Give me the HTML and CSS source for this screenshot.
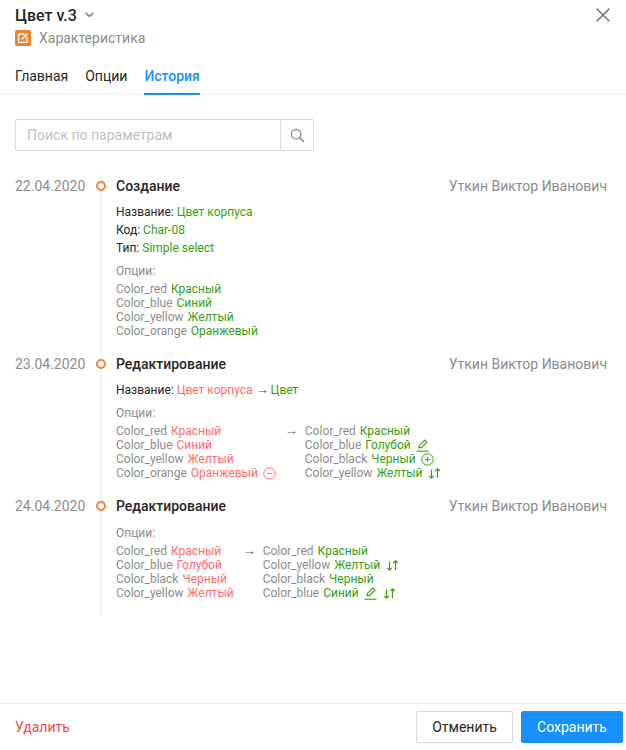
FILE: index.html
```html
<html>

<head>
    <title>Цвет v.3</title>
    <link rel="stylesheet" href="styles.css">
</head>

<body>
    <div class="header">
        <div class="title_row">
            <div class="title">Цвет v.3</div>
            <svg class="chevron" width="9" height="6" viewBox="0 0 9 6"><path d="M.7 1l3.8 3.4L8.3 1" fill="none" stroke="#8c8c8c" stroke-width="1.8"/></svg>
            <svg class="close" width="14" height="14" viewBox="0 0 14 14"><path d="M.6.6l12.8 12.8M13.4.6L.6 13.4" fill="none" stroke="#808080" stroke-width="1.6"/></svg>
        </div>
        <div class="subtitle">
            <svg width="16" height="16" viewBox="0 0 16 16"><rect width="16" height="16" rx="1.5" fill="#f5822e"/><path d="M9.5 4H3.6v8.4H12V7" fill="none" stroke="#fff" stroke-width="1.3"/><path d="M6.8 9.2l5.6-5.6" stroke="#fff" stroke-width="1.6"/></svg>
            <span>Характеристика</span>
        </div>
    </div>

    <div class="tabs">
        <div class="tab">Главная</div>
        <div class="tab">Опции</div>
        <div class="tab tab_active">История</div>
    </div>

    <div class="content">
        <div class="search">
            <div class="search_input">Поиск по параметрам</div>
            <div class="search_button">
                <svg width="15" height="15" viewBox="0 0 15 15"><circle cx="6.2" cy="6.2" r="4.8" fill="none" stroke="#808080" stroke-width="1.2"/><path d="M9.8 9.8l4.2 4.2" stroke="#808080" stroke-width="1.3"/></svg>
            </div>
        </div>

        <div class="event event_first">
            <div class="date">22.04.2020</div>
            <div class="body">
                <div class="bullet"></div>
                <div class="event_head">
                    <div class="event_name">Создание</div>
                    <div class="author">Уткин Виктор Иванович</div>
                </div>
                <div class="field">Название: <span class="new">Цвет корпуса</span></div>
                <div class="field">Код: <span class="new">Char-08</span></div>
                <div class="field">Тип: <span class="new">Simple select</span></div>
                <div class="options_label">Опции:</div>
                <div class="opt">Color_red <span class="new">Красный</span></div>
                <div class="opt">Color_blue <span class="new">Синий</span></div>
                <div class="opt">Color_yellow <span class="new">Желтый</span></div>
                <div class="opt">Color_orange <span class="new">Оранжевый</span></div>
            </div>
        </div>

        <div class="event">
            <div class="date">23.04.2020</div>
            <div class="body">
                <div class="bullet"></div>
                <div class="event_head">
                    <div class="event_name">Редактирование</div>
                    <div class="author">Уткин Виктор Иванович</div>
                </div>
                <div class="field">Название: <span class="old">Цвет корпуса</span> <span class="field_arrow">→</span> <span class="new">Цвет</span></div>
                <div class="options_label">Опции:</div>
                <div class="compare">
                    <div>
                        <div class="opt">Color_red <span class="old">Красный</span></div>
                        <div class="opt">Color_blue <span class="old">Синий</span></div>
                        <div class="opt">Color_yellow <span class="old">Желтый</span></div>
                        <div class="opt">Color_orange <span class="old">Оранжевый</span>
                            <svg class="icon" width="13" height="13" viewBox="0 0 13 13"><circle cx="6.5" cy="6.5" r="5.7" fill="none" stroke="#ff6b6b"/><path d="M3.8 6.5h5.4" stroke="#ff6b6b"/></svg>
                        </div>
                    </div>
                    <div class="arrow">→</div>
                    <div>
                        <div class="opt">Color_red <span class="new">Красный</span></div>
                        <div class="opt">Color_blue <span class="new">Голубой</span>
                            <svg class="icon" width="13" height="13" viewBox="0 0 13 13"><path d="M3 8.8l.5-2.6L8.8 1l2.2 2.2-5.3 5.2z" fill="none" stroke="#389e0d" stroke-width="1.1"/><path d="M.5 12.2h12" stroke="#389e0d" stroke-width="1.1"/></svg>
                        </div>
                        <div class="opt">Color_black <span class="new">Черный</span>
                            <svg class="icon" width="13" height="13" viewBox="0 0 13 13"><circle cx="6.5" cy="6.5" r="5.7" fill="none" stroke="#389e0d"/><path d="M3.8 6.5h5.4M6.5 3.8v5.4" stroke="#389e0d"/></svg>
                        </div>
                        <div class="opt">Color_yellow <span class="new">Желтый</span>
                            <svg class="icon icon_swap" width="13" height="13" viewBox="0 0 13 13"><path d="M3.5 2.5v8.5M1.2 8.8l2.3 2.3 2.3-2.3M9.5 11V2M7.2 4.2l2.3-2.3 2.3 2.3" fill="none" stroke="#389e0d" stroke-width="1.2"/></svg>
                        </div>
                    </div>
                </div>
            </div>
        </div>

        <div class="event">
            <div class="date">24.04.2020</div>
            <div class="body">
                <div class="bullet"></div>
                <div class="event_head">
                    <div class="event_name">Редактирование</div>
                    <div class="author">Уткин Виктор Иванович</div>
                </div>
                <div class="options_label">Опции:</div>
                <div class="compare">
                    <div>
                        <div class="opt">Color_red <span class="old">Красный</span></div>
                        <div class="opt">Color_blue <span class="old">Голубой</span></div>
                        <div class="opt">Color_black <span class="old">Черный</span></div>
                        <div class="opt">Color_yellow <span class="old">Желтый</span></div>
                    </div>
                    <div class="arrow">→</div>
                    <div>
                        <div class="opt">Color_red <span class="new">Красный</span></div>
                        <div class="opt">Color_yellow <span class="new">Желтый</span>
                            <svg class="icon icon_swap" width="13" height="13" viewBox="0 0 13 13"><path d="M3.5 2.5v8.5M1.2 8.8l2.3 2.3 2.3-2.3M9.5 11V2M7.2 4.2l2.3-2.3 2.3 2.3" fill="none" stroke="#389e0d" stroke-width="1.2"/></svg>
                        </div>
                        <div class="opt">Color_black <span class="new">Черный</span></div>
                        <div class="opt">Color_blue <span class="new">Синий</span>
                            <svg class="icon" width="13" height="13" viewBox="0 0 13 13"><path d="M3 8.8l.5-2.6L8.8 1l2.2 2.2-5.3 5.2z" fill="none" stroke="#389e0d" stroke-width="1.1"/><path d="M.5 12.2h12" stroke="#389e0d" stroke-width="1.1"/></svg>
                            <svg class="icon icon_swap" width="13" height="13" viewBox="0 0 13 13"><path d="M3.5 2.5v8.5M1.2 8.8l2.3 2.3 2.3-2.3M9.5 11V2M7.2 4.2l2.3-2.3 2.3 2.3" fill="none" stroke="#389e0d" stroke-width="1.2"/></svg>
                        </div>
                    </div>
                </div>
            </div>
        </div>
    </div>

    <div class="footer">
        <div class="delete">Удалить</div>
        <div class="button">Отменить</div>
        <div class="button button_primary">Сохранить</div>
    </div>
</body>

</html>
```

FILE: styles.css
```css
html {
    height: 100%;
}

body {
    margin: 0;
    height: 100%;
    overflow: hidden;
    display: flex;
    flex-direction: column;
    background-color: #fff;
    color: #262626;
    font-family: Roboto, "Liberation Sans", sans-serif;
    font-size: 14px;
}

.header {
    padding: 4px 16px 0 15px;
}

.title_row {
    display: flex;
    align-items: center;
    height: 22px;
}

.title {
    font-size: 16px;
    font-weight: 500;
}

.chevron {
    margin-left: 8px;
}

.close {
    margin-left: auto;
}

.subtitle {
    display: flex;
    align-items: center;
    gap: 8px;
    margin-top: 4px;
    height: 16px;
    color: #8c8c8c;
}

.tabs {
    display: flex;
    gap: 17px;
    margin-top: 20px;
    padding: 0 15px;
    border-bottom: 1px solid #ededed;
}

.tab {
    height: 27px;
    line-height: 20px;
}

.tab_active {
    color: #1890ff;
    font-weight: 500;
    border-bottom: 2px solid #1890ff;
    margin-bottom: -1px;
}

.content {
    flex: 1;
    padding: 24px 19px 0 15px;
}

.search {
    display: flex;
    width: 299px;
    height: 32px;
    box-sizing: border-box;
    border: 1px solid #d9d9d9;
    border-radius: 2px;
}

.search_input {
    flex: 1;
    padding-left: 11px;
    line-height: 30px;
    color: #bfbfbf;
}

.search_button {
    width: 32px;
    display: flex;
    justify-content: center;
    align-items: center;
    border-left: 1px solid #d9d9d9;
}

.event {
    display: flex;
}

.event_first {
    margin-top: 24px;
}

.date {
    width: 85px;
    flex-shrink: 0;
    line-height: 22px;
    color: #8c8c8c;
}

.body {
    flex: 1;
    position: relative;
    padding: 0 0 15px 14px;
    border-left: 2px solid #f2f2f2;
}

.event:last-child .body {
    padding-bottom: 16px;
}

.bullet {
    position: absolute;
    left: -6px;
    top: 6px;
    width: 10px;
    height: 10px;
    box-sizing: border-box;
    border: 2.5px solid #f5822e;
    border-radius: 50%;
    background-color: #fff;
}

.event_head {
    display: flex;
    justify-content: space-between;
    line-height: 22px;
    margin-bottom: 6px;
}

.event_name {
    font-weight: 500;
}

.author {
    color: #8c8c8c;
}

.field {
    font-size: 12px;
    line-height: 18px;
}

.field_arrow {
    font-family: "Liberation Sans", sans-serif;
    font-size: 13px;
    line-height: 12px;
    letter-spacing: -1px;
    color: #595959;
}

.options_label {
    margin-top: 9px;
    margin-bottom: 4px;
    font-size: 12px;
    line-height: 14px;
    color: #8c8c8c;
}

.field + .options_label {
    margin-top: 7px;
}

.opt {
    display: flex;
    align-items: center;
    gap: 4px;
    font-size: 12px;
    line-height: 14px;
    height: 14px;
    color: #8c8c8c;
    white-space: nowrap;
}

.new {
    color: #389e0d;
}

.old {
    color: #ff6b6b;
}

.icon {
    margin-left: 1px;
}

.icon_swap {
    margin-left: 2px;
}

.compare {
    display: flex;
    gap: 10px;
}

.arrow {
    width: 9px;
    font-family: "Liberation Sans", sans-serif;
    font-size: 13px;
    line-height: 14px;
    text-indent: -1px;
    color: #595959;
}

.footer {
    display: flex;
    align-items: center;
    gap: 8px;
    height: 46px;
    padding: 0 3px 0 15px;
    border-top: 1px solid #ededed;
    flex-shrink: 0;
}

.delete {
    margin-right: auto;
    color: #f5484b;
}

.button {
    width: 97px;
    height: 32px;
    box-sizing: border-box;
    display: flex;
    justify-content: center;
    align-items: center;
    border: 1px solid #d9d9d9;
    border-radius: 2px;
    box-shadow: 0 2px 0 rgba(0, 0, 0, 0.02);
}

.button_primary {
    width: 102px;
    background-color: #1890ff;
    border-color: #1890ff;
    color: #fff;
}
```
